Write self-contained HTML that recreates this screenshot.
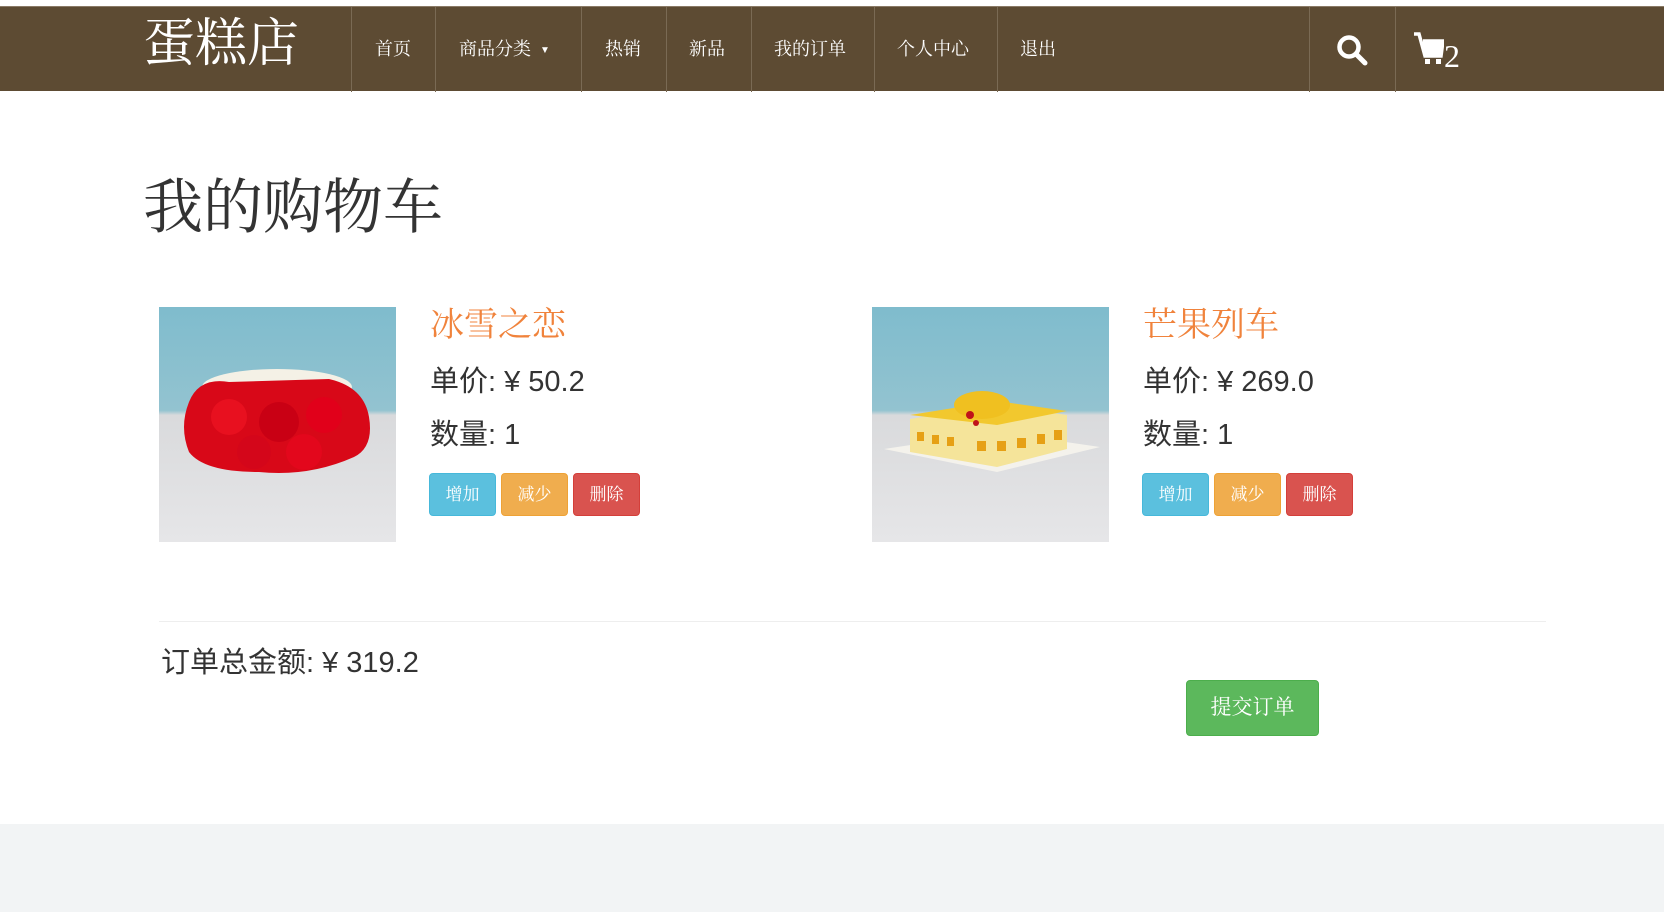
<!DOCTYPE html>
<html><head><meta charset="utf-8"><style>
*{margin:0;padding:0;box-sizing:border-box}
body{width:1664px;height:912px;background:#fff;position:relative;overflow:hidden;font-family:"Liberation Sans","Noto Sans CJK SC",sans-serif;color:#333}
.abs{position:absolute}
.hdr{left:0;top:6px;width:1664px;height:85px;background:#5d4b33;border-top:1px solid #8a7a66}
.logo{left:143px;font-family:"Liberation Serif","Noto Serif CJK SC",serif;font-size:52px;color:#fff;line-height:68px}
.sep{top:0;width:1px;height:85px;background:#7a6a54}
.nav{top:30px;font-family:"Liberation Serif","Noto Serif CJK SC",serif;font-size:18px;color:#fff;line-height:24px}
.title{left:143px;top:173px;font-family:"Liberation Serif","Noto Serif CJK SC",serif;font-size:60px;line-height:70px;color:#333}
.img{width:237px;height:235px;top:307px;background:linear-gradient(#7fbccd 0%,#93c3d0 44%,#d9dadc 46%,#e6e6e8 100%);overflow:hidden}
.name{font-family:"Liberation Serif","Noto Serif CJK SC",serif;font-size:34px;color:#f0833c;top:304px;line-height:44px}
.pr{font-size:29px;line-height:36px;color:#333}
.btn{top:473px;height:43px;width:67px;border-radius:4px;color:#fff;font-family:"Liberation Serif","Noto Serif CJK SC",serif;font-size:17px;text-align:center;line-height:41px}
.b1{background:#5bc0de;border:1px solid #46b8da}
.b2{background:#f0ad4e;border:1px solid #eea236}
.b3{background:#d9534f;border:1px solid #d43f3a}
</style></head><body>
<div class="abs hdr">
 <div class="abs logo" style="top:4px">蛋糕店</div>
 <div class="abs sep" style="left:351px"></div>
 <div class="abs sep" style="left:435px"></div>
 <div class="abs sep" style="left:581px"></div>
 <div class="abs sep" style="left:666px"></div>
 <div class="abs sep" style="left:751px"></div>
 <div class="abs sep" style="left:874px"></div>
 <div class="abs sep" style="left:997px"></div>
 <div class="abs sep" style="left:1309px"></div>
 <div class="abs sep" style="left:1395px"></div>
 <div class="abs nav" style="left:375px">首页</div>
 <div class="abs nav" style="left:459px">商品分类 &nbsp;<span style="font-size:10px;vertical-align:middle">▼</span></div>
 <div class="abs nav" style="left:605px">热销</div>
 <div class="abs nav" style="left:689px">新品</div>
 <div class="abs nav" style="left:774px">我的订单</div>
 <div class="abs nav" style="left:897px">个人中心</div>
 <div class="abs nav" style="left:1020px">退出</div>
 <svg class="abs" style="left:1336px;top:27px" width="34" height="34" viewBox="0 0 34 34"><circle cx="13" cy="13" r="9.5" fill="none" stroke="#fff" stroke-width="4.5"/><line x1="20" y1="20" x2="29" y2="29" stroke="#fff" stroke-width="5" stroke-linecap="round"/></svg>
 <svg class="abs" style="left:1414px;top:25px" width="30" height="34" viewBox="0 0 30 34"><path d="M0 2h5l6 22h16l2-15H9" fill="none" stroke="#fff" stroke-width="3.5"/><path d="M8 10h20l-2 13H12z" fill="#fff"/><rect x="11" y="27" width="5" height="5" fill="#fff"/><rect x="22" y="27" width="5" height="5" fill="#fff"/></svg>
 <div class="abs" style="left:1444px;top:31px;font-family:'Liberation Serif',serif;font-size:32px;color:#fff;line-height:36px">2</div>
</div>

<div class="abs title">我的购物车</div>

<div class="abs img" style="left:159px">
 <svg width="237" height="235" viewBox="0 0 237 235"><ellipse cx="118" cy="80" rx="75" ry="18" fill="#f4f1e6"/><path d="M30 95 Q40 70 70 75 L170 72 Q205 80 210 110 Q215 140 195 150 Q150 170 100 165 Q45 165 30 145 Q20 120 30 95Z" fill="#d80818"/><circle cx="70" cy="110" r="18" fill="#e8101f"/><circle cx="120" cy="115" r="20" fill="#c90014"/><circle cx="165" cy="108" r="18" fill="#e1001a"/><circle cx="95" cy="145" r="17" fill="#d4061a"/><circle cx="145" cy="145" r="18" fill="#e3071c"/></svg>
</div>
<div class="abs name" style="left:430px">冰雪之恋</div>
<div class="abs pr" style="left:430px;top:364px">单价: ¥ 50.2</div>
<div class="abs pr" style="left:430px;top:417px">数量: 1</div>
<div class="abs btn b1" style="left:429px">增加</div>
<div class="abs btn b2" style="left:501px">减少</div>
<div class="abs btn b3" style="left:573px">删除</div>

<div class="abs img" style="left:872px">
 <svg width="237" height="235" viewBox="0 0 237 235"><path d="M12 142 L125 165 L228 140 L125 125Z" fill="#f4f2ec"/><path d="M38 112 L38 145 L125 160 L195 142 L195 108 L125 98Z" fill="#f5e49a"/><path d="M38 108 L125 118 L195 104 L125 94Z" fill="#f2c82e"/><ellipse cx="110" cy="98" rx="28" ry="14" fill="#f0c020"/><circle cx="98" cy="108" r="4" fill="#c0121a"/><circle cx="104" cy="116" r="3" fill="#c0121a"/><g fill="#e6a015"><rect x="45" y="125" width="7" height="9"/><rect x="60" y="128" width="7" height="9"/><rect x="75" y="130" width="7" height="9"/><rect x="105" y="134" width="9" height="10"/><rect x="125" y="134" width="9" height="10"/><rect x="145" y="131" width="9" height="10"/><rect x="165" y="127" width="8" height="10"/><rect x="182" y="123" width="8" height="10"/></g></svg>
</div>
<div class="abs name" style="left:1143px">芒果列车</div>
<div class="abs pr" style="left:1143px;top:364px">单价: ¥ 269.0</div>
<div class="abs pr" style="left:1143px;top:417px">数量: 1</div>
<div class="abs btn b1" style="left:1142px">增加</div>
<div class="abs btn b2" style="left:1214px">减少</div>
<div class="abs btn b3" style="left:1286px">删除</div>

<div class="abs" style="left:159px;top:621px;width:1387px;height:1px;background:#eee"></div>
<div class="abs pr" style="left:161px;top:645px">订单总金额: ¥ 319.2</div>
<div class="abs" style="left:1186px;top:680px;width:133px;height:56px;background:#5cb85c;border:1px solid #4cae4c;border-radius:4px;color:#fff;font-family:'Liberation Serif','Noto Serif CJK SC',serif;font-size:21px;text-align:center;line-height:52px">提交订单</div>

<div class="abs" style="left:0;top:824px;width:1664px;height:88px;background:#f2f4f5"></div>
</body></html>
